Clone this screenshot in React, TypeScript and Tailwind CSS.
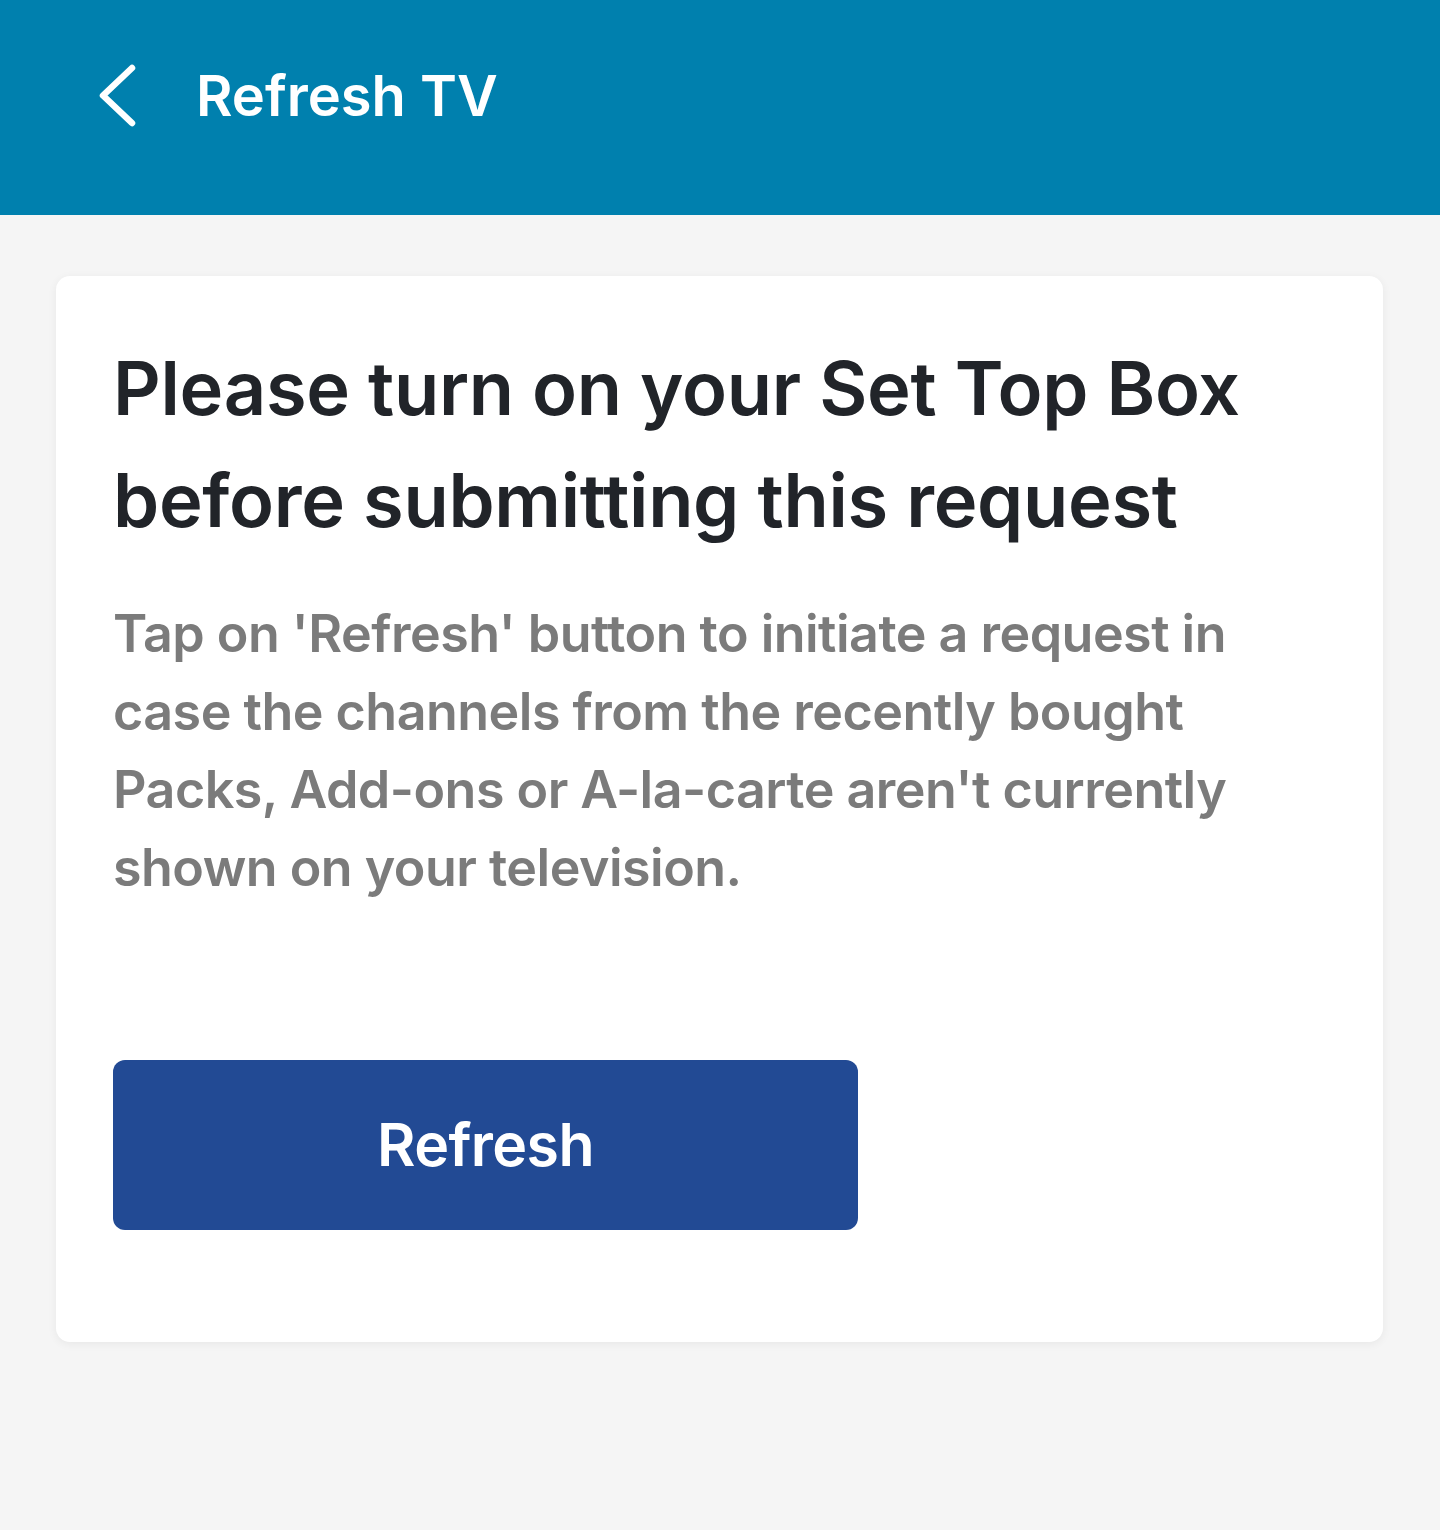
export default function App() {
  return (
    <div className="min-h-[1530px] bg-[#f5f5f5] font-['Inter','Liberation_Sans',sans-serif]">
      {/* Header */}
      <header className="h-[215px] bg-[#0080ae] pt-[40px]">
        <div className="flex h-[112px] items-center pl-[97px]">
          <svg width="44" height="64" viewBox="0 0 44 64" fill="none">
            <path d="M35 4 L6 31.5 L35 59" stroke="white" strokeWidth="6.5" strokeLinecap="round" strokeLinejoin="round" />
          </svg>
          <h1 className="ml-[55px] text-[56px] leading-none font-[560] text-white">Refresh TV</h1>
        </div>
      </header>

      {/* Card */}
      <main className="pt-[61px] pl-[56px] pr-[57px]">
        <section className="rounded-[14px] bg-white px-[57px] pt-[56px] pb-[112px] shadow-[0_2px_10px_rgba(0,0,0,0.06)]">
          <h2 className="text-[74px] leading-[112px] font-[560] tracking-[-0.004em] text-[#212429]">
            Please turn on your Set Top Box before submitting this request
          </h2>
          <p className="mt-[39px] text-[52px] leading-[78px] font-[560] tracking-[-0.01em] text-[#7b7b7b]">
            Tap on 'Refresh' button to initiate a request in case the channels from the recently bought Packs, Add-ons or A-la-carte aren't currently shown on your television.
          </p>
          <button className="mt-[153px] flex h-[170px] w-[745px] items-center justify-center rounded-[12px] bg-[#224a94] text-[59px] font-[560] tracking-[-0.01em] text-white">
            Refresh
          </button>
        </section>
      </main>
    </div>
  )
}
